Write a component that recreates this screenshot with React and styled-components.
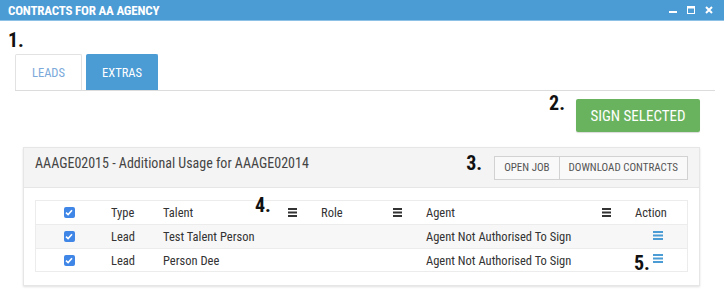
import React from "react";
import styled, { createGlobalStyle } from "styled-components";

const Global = createGlobalStyle`
  html, body { margin: 0; padding: 0; background: #fff; }
  body { font-family: "Roboto Condensed", Roboto, "Liberation Sans", sans-serif; color: #333; }
  * { box-sizing: border-box; }
`;

const Window = styled.div`
  width: 724px;
  height: 291px;
  overflow: hidden;
  display: flex;
  flex-direction: column;
`;

const TitleBar = styled.div`
  height: 21px;
  background: #4b9bd5;
  border-bottom: 1px solid #8fc0e6;
  display: flex;
  align-items: center;
  justify-content: space-between;
  padding: 0 11px 0 8px;
  color: #fff;
  font-size: 13px;
  font-weight: 700;
  letter-spacing: -0.2px;
`;

const WinControls = styled.div`
  display: flex;
  align-items: center;
  gap: 10px;
`;

const Content = styled.div`
  padding: 0 9px 0 8px;
  display: flex;
  flex-direction: column;
`;

const Step = styled.div`
  font-size: 20px;
  line-height: 20px;
  font-weight: 700;
  color: #111;
  margin-top: ${(p) => p.$top || 0}px;
`;

const TabBar = styled.div`
  margin: 4px 0 0 7px;
  display: flex;
  gap: 4px;
  border-bottom: 1px solid #dcdcdc;
`;

const Tab = styled.div`
  height: 36px;
  width: ${(p) => p.$w}px;
  display: flex;
  align-items: center;
  justify-content: center;
  font-size: 12.5px;
  border: 1px solid ${(p) => (p.$active ? "#4b9bd5" : "#e2e2e2")};
  border-bottom: none;
  border-radius: 2px 2px 0 0;
  background: ${(p) => (p.$active ? "#4b9bd5" : "#fff")};
  color: ${(p) => (p.$active ? "#fff" : "#7aa9da")};
`;

const ActionRow = styled.div`
  display: flex;
  justify-content: flex-end;
  align-items: flex-start;
  gap: 11px;
  padding-right: 15px;
  margin-top: 2px;
`;

const SignButton = styled.button`
  margin-top: 6px;
  width: 124px;
  height: 33px;
  background: #6ab35e;
  border: none;
  border-radius: 2px;
  color: #fff;
  font-family: inherit;
  font-size: 15px;
  box-shadow: 0 1px 1px rgba(0, 0, 0, 0.15);
`;

const Panel = styled.div`
  margin: 15px 15px 0 15px;
  border: 1px solid #e6e6e6;
  box-shadow: 0 1px 2px rgba(0, 0, 0, 0.12);
  background: #fff;
`;

const PanelHeader = styled.div`
  height: 40px;
  background: #f4f4f4;
  border-bottom: 1px solid #e6e6e6;
  display: flex;
  align-items: center;
  padding: 0 11px;
`;

const PanelTitle = styled.div`
  flex: 1;
  font-size: 14px;
  color: #444;
  align-self: flex-start;
  padding-top: 7px;
`;

const HeaderStep = styled(Step)`
  align-self: flex-start;
  margin-top: 5px;
  margin-right: 13px;
`;

const ButtonGroup = styled.div`
  display: flex;
`;

const SmallButton = styled.button`
  height: 24px;
  padding: 0 ${(p) => p.$pad}px;
  background: #f9f9f9;
  border: 1px solid #d2d2d2;
  margin-left: -1px;
  font-family: inherit;
  font-size: 11px;
  color: #555;
`;

const PanelBody = styled.div`
  padding: 12px 11px 13px 11px;
`;

const Table = styled.div`
  border: 1px solid #ececec;
  display: grid;
  grid-template-columns: 65px 52px 158px 105px 209px 1fr;
`;

const Cell = styled.div`
  position: relative;
  height: ${(p) => p.$h}px;
  display: flex;
  align-items: center;
  justify-content: ${(p) => p.$justify || "flex-start"};
  padding: 0 ${(p) => p.$pr ?? 10}px 0 ${(p) => p.$pl ?? 10}px;
  font-size: 12.5px;
  color: #333;
  background: ${(p) => (p.$shade ? "#f7f7f7" : "#fff")};
  border-top: ${(p) => (p.$line ? "1px solid #ececec" : "none")};
`;

const CheckBox = styled.span`
  width: 11px;
  height: 11px;
  border-radius: 2px;
  background: #3f86e6;
  display: inline-flex;
  align-items: center;
  justify-content: center;
  margin-left: 1px;
`;

const Overlay = styled(Step)`
  position: absolute;
  left: ${(p) => p.$x}px;
  top: ${(p) => p.$y}px;
`;

const IconWrap = styled.span`
  display: flex;
  margin-top: -3px;
`;

const Menu = ({ color = "#333", w = 9 }) => (
  <svg width={w} height="9" viewBox={`0 0 ${w} 9`}>
    <rect x="0" y="0" width={w} height="2" fill={color} />
    <rect x="0" y="3.5" width={w} height="2" fill={color} />
    <rect x="0" y="7" width={w} height="2" fill={color} />
  </svg>
);

const Check = () => (
  <CheckBox>
    <svg width="8" height="7" viewBox="0 0 8 7">
      <path d="M1 3.6 L3.1 5.6 L7 1.2" fill="none" stroke="#fff" strokeWidth="1.6" />
    </svg>
  </CheckBox>
);

const rows = [
  { type: "Lead", talent: "Test Talent Person", agent: "Agent Not Authorised To Sign" },
  { type: "Lead", talent: "Person Dee", agent: "Agent Not Authorised To Sign" },
];

export default function App() {
  return (
    <Window>
      <Global />
      <TitleBar>
        <span>CONTRACTS FOR AA AGENCY</span>
        <WinControls>
          <svg width="8" height="8" viewBox="0 0 8 8">
            <rect x="0" y="5" width="8" height="2" fill="#fff" />
          </svg>
          <svg width="8" height="8" viewBox="0 0 8 8">
            <rect x="0.5" y="0.5" width="7" height="7" fill="none" stroke="#fff" />
            <rect x="0" y="0" width="8" height="2.5" fill="#fff" />
          </svg>
          <svg width="8" height="8" viewBox="0 0 8 8">
            <path d="M1 1 L7 7 M7 1 L1 7" stroke="#fff" strokeWidth="2" />
          </svg>
        </WinControls>
      </TitleBar>
      <Content>
        <Step $top={9}>1.</Step>
        <TabBar>
          <Tab $w={67}>LEADS</Tab>
          <Tab $w={72} $active>EXTRAS</Tab>
        </TabBar>
        <ActionRow>
          <Step>2.</Step>
          <SignButton>SIGN SELECTED</SignButton>
        </ActionRow>
        <Panel>
          <PanelHeader>
            <PanelTitle>AAAGE02015 - Additional Usage for AAAGE02014</PanelTitle>
            <HeaderStep>3.</HeaderStep>
            <ButtonGroup>
              <SmallButton $pad={9}>OPEN JOB</SmallButton>
              <SmallButton $pad={9}>DOWNLOAD CONTRACTS</SmallButton>
            </ButtonGroup>
          </PanelHeader>
          <PanelBody>
            <Table>
              <Cell $h={23} $justify="center" $pl={0} $pr={0}><Check /></Cell>
              <Cell $h={23}>Type</Cell>
              <Cell $h={23} $justify="space-between" $pr={14}>
                Talent
                <Overlay $x={102} $y={-6}>4.</Overlay>
                <Menu />
              </Cell>
              <Cell $h={23} $justify="space-between" $pr={14}>Role<Menu /></Cell>
              <Cell $h={23} $justify="space-between" $pr={14}>Agent<Menu /></Cell>
              <Cell $h={23}>Action</Cell>
              {rows.map((r, i) => {
                const h = i === 0 ? 24 : 23;
                const shade = i === 0;
                return (
                  <React.Fragment key={i}>
                    <Cell $h={h} $shade={shade} $line $justify="center" $pl={0} $pr={0}><Check /></Cell>
                    <Cell $h={h} $shade={shade} $line>{r.type}</Cell>
                    <Cell $h={h} $shade={shade} $line>{r.talent}</Cell>
                    <Cell $h={h} $shade={shade} $line />
                    <Cell $h={h} $shade={shade} $line>{r.agent}</Cell>
                    <Cell $h={h} $shade={shade} $line $justify="flex-end" $pr={24}>
                      {i === 1 && <Overlay $x={9} $y={4}>5.</Overlay>}
                      <IconWrap>
                        <Menu color="#4b9bd5" w={10} />
                      </IconWrap>
                    </Cell>
                  </React.Fragment>
                );
              })}
            </Table>
          </PanelBody>
        </Panel>
      </Content>
    </Window>
  );
}
